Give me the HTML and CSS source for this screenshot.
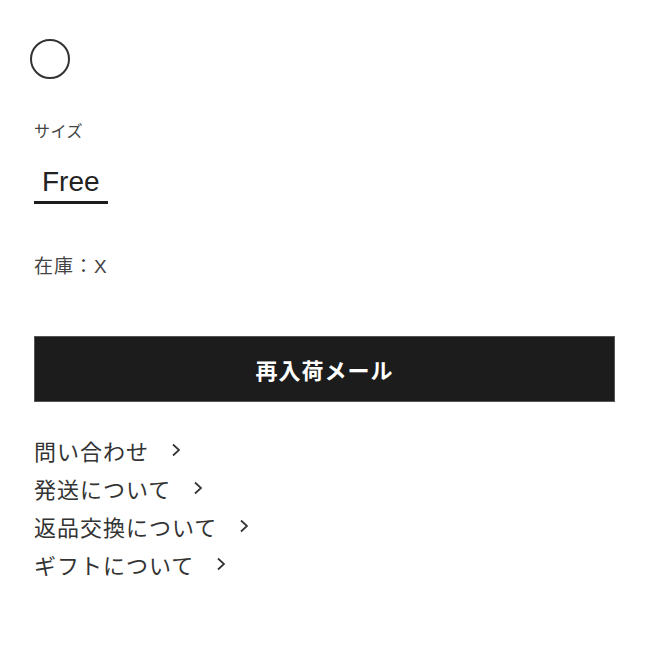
FILE: index.html
```html
<!DOCTYPE html>
<html lang="ja">
<head>
    <meta charset="UTF-8">
    <meta name="viewport" content="width=device-width, initial-scale=1.0">
    <title>商品詳細</title>
    <link rel="stylesheet" href="styles.css">
</head>
<body>
    <div class="product-options">
        <div class="color-swatch"></div>

        <p class="option-label">サイズ</p>
        <div class="size-list">
            <span class="size-item selected">Free</span>
        </div>

        <p class="stock">在庫：X</p>

        <button type="button" class="restock-btn">再入荷メール</button>

        <ul class="info-links">
            <li><a href="#">問い合わせ<svg class="chevron" viewBox="0 0 10 14"><polyline points="2,1.5 8,7 2,12.5"/></svg></a></li>
            <li><a href="#">発送について<svg class="chevron" viewBox="0 0 10 14"><polyline points="2,1.5 8,7 2,12.5"/></svg></a></li>
            <li><a href="#">返品交換について<svg class="chevron" viewBox="0 0 10 14"><polyline points="2,1.5 8,7 2,12.5"/></svg></a></li>
            <li><a href="#">ギフトについて<svg class="chevron" viewBox="0 0 10 14"><polyline points="2,1.5 8,7 2,12.5"/></svg></a></li>
        </ul>
    </div>
</body>
</html>
```

FILE: styles.css
```css
body {
    margin: 0;
    padding: 0;
    background-color: #ffffff;
    color: #333;
    font-family: "Liberation Sans", "Noto Sans CJK JP", sans-serif;
}
.product-options {
    padding: 39px 35px 0 34px;
}
.color-swatch {
    width: 40px;
    height: 40px;
    margin-left: -4px;
    box-sizing: border-box;
    border: 2.5px solid #333;
    border-radius: 50%;
}
.option-label {
    margin: 43px 0 0;
    font-size: 16px;
    line-height: 20px;
    letter-spacing: 0.5px;
    color: #444;
}
.size-list {
    display: flex;
    margin-top: 24px;
}
.size-item {
    padding: 0 8px 3px;
    font-size: 28px;
    line-height: 32px;
    color: #222;
}
.size-item.selected {
    border-bottom: 3px solid #1c1c1c;
}
.stock {
    margin: 51px 0 0;
    font-size: 19px;
    line-height: 24px;
    letter-spacing: 1px;
    color: #444;
}
.restock-btn {
    display: block;
    width: 100%;
    height: 66px;
    margin-top: 57px;
    padding: 0;
    border: 1px solid #555;
    background-color: #1c1c1c;
    color: #fff;
    font-family: "Noto Sans CJK JP", sans-serif;
    font-size: 22px;
    font-weight: bold;
    letter-spacing: 1px;
    cursor: pointer;
}
.info-links {
    list-style: none;
    margin: 29px 0 0;
    padding: 0;
}
.info-links li {
    height: 38px;
    line-height: 38px;
}
.info-links a {
    display: inline-flex;
    align-items: center;
    gap: 22px;
    height: 38px;
    line-height: 38px;
    font-family: "Noto Sans CJK JP", sans-serif;
    font-size: 22px;
    letter-spacing: 1px;
    color: #333;
    text-decoration: none;
}
.chevron {
    width: 10px;
    height: 14px;
    fill: none;
    stroke: #333;
    stroke-width: 1.7;
}
```
